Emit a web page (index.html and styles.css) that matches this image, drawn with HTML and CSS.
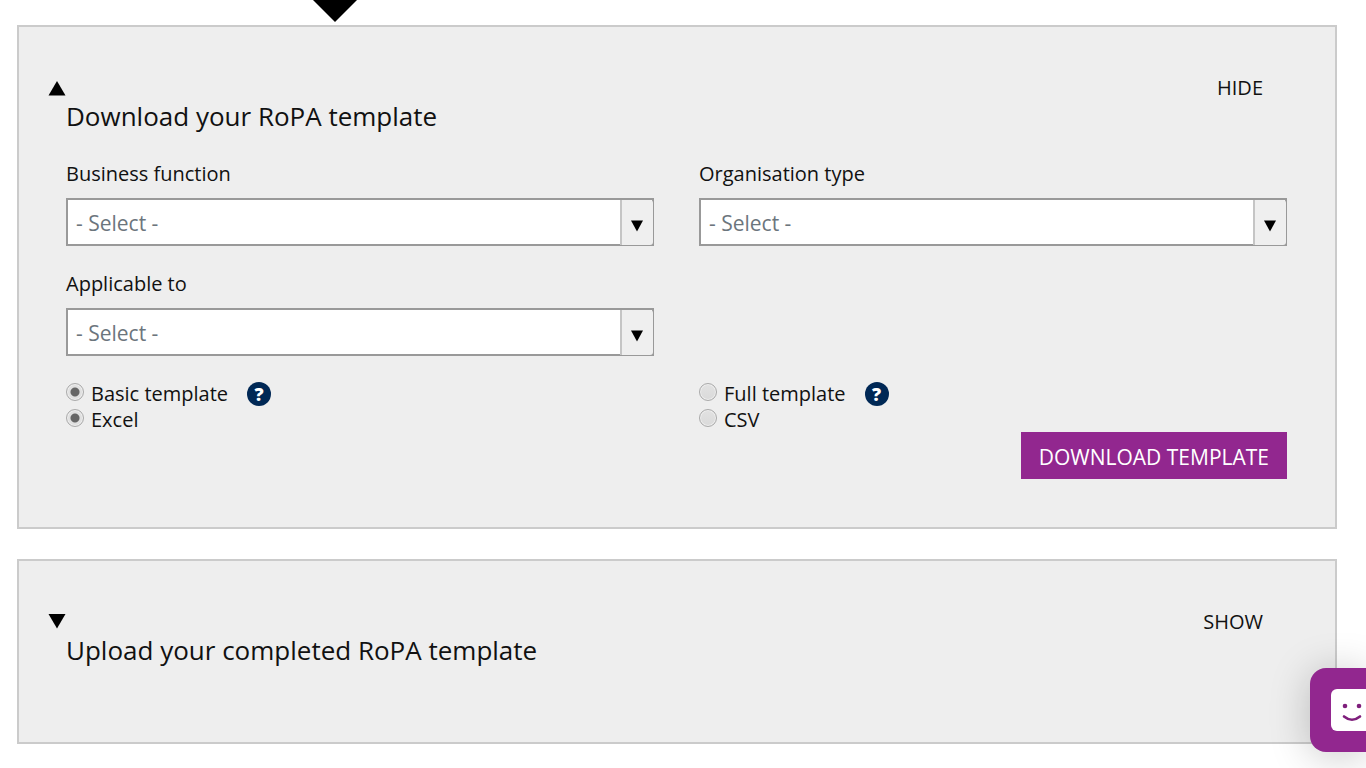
FILE: index.html
```html
<!DOCTYPE html>
<html lang="en">
<head>
<meta charset="utf-8">
<title>RoPA template</title>
<link rel="stylesheet" href="styles.css">
</head>
<body>
<div class="pointer">
  <svg width="46" height="23" viewBox="0 0 46 23" aria-hidden="true"><path d="M0 -1H46L23 22Z"/></svg>
</div>
<main class="panels">
  <section class="panel">
    <header class="panel-head">
      <svg class="marker" width="18" height="16" viewBox="0 0 18 16" aria-hidden="true"><path d="M9 1L17.500 15.500H.5Z"/></svg>
      <button class="toggle" type="button" aria-expanded="true">HIDE</button>
      <h2 class="title">Download your RoPA template</h2>
    </header>
    <form class="form">
      <div class="fields">
        <div class="field">
          <label for="function">Business function</label>
          <div class="combo">
            <select id="function"><option>- Select -</option></select>
            <span class="combo-arrow"><svg width="12" height="12" viewBox="0 0 12 12"><path d="M0 .5H12L6 11.500Z"/></svg></span>
          </div>
        </div>
        <div class="field">
          <label for="organisation">Organisation type</label>
          <div class="combo">
            <select id="organisation"><option>- Select -</option></select>
            <span class="combo-arrow"><svg width="12" height="12" viewBox="0 0 12 12"><path d="M0 .5H12L6 11.500Z"/></svg></span>
          </div>
        </div>
        <div class="field">
          <label for="applicable">Applicable to</label>
          <div class="combo">
            <select id="applicable"><option>- Select -</option></select>
            <span class="combo-arrow"><svg width="12" height="12" viewBox="0 0 12 12"><path d="M0 .5H12L6 11.500Z"/></svg></span>
          </div>
        </div>
      </div>
      <div class="options">
        <div class="option"><input type="radio" name="kind" id="basic" checked><label for="basic">Basic template</label><button class="help" type="button" aria-label="Help: basic template">?</button></div>
        <div class="option"><input type="radio" name="kind" id="full"><label for="full">Full template</label><button class="help" type="button" aria-label="Help: full template">?</button></div>
        <div class="option"><input type="radio" name="format" id="excel" checked><label for="excel">Excel</label></div>
        <div class="option"><input type="radio" name="format" id="csv"><label for="csv">CSV</label></div>
      </div>
      <div class="actions"><button class="download" type="button">DOWNLOAD TEMPLATE</button></div>
    </form>
  </section>
  <section class="panel panel-closed">
    <header class="panel-head">
      <svg class="marker" width="18" height="16" viewBox="0 0 18 16" aria-hidden="true"><path d="M.5 0H17.500L9 14.500Z"/></svg>
      <button class="toggle" type="button" aria-expanded="false">SHOW</button>
      <h2 class="title">Upload your completed RoPA template</h2>
    </header>
  </section>
</main>
<button class="feedback" type="button" aria-label="Feedback">
  <svg width="35" height="42" viewBox="0 0 35 42" aria-hidden="true">
    <rect width="60" height="42" rx="6" fill="#fff"/>
    <circle cx="14" cy="17" r="2.300"/><circle cx="28" cy="17" r="2.300"/>
    <path d="M13 27.500Q21 34 29 27.500" fill="none" stroke="#7f1f7c" stroke-width="2.600" stroke-linecap="round"/>
  </svg>
</button>
</body>
</html>
```
FILE: styles.css
```css
* { box-sizing: border-box; }
body {
  margin: 0;
  background: #fff;
  color: #111;
  font: 400 20px/28px "Open Sans", "Noto Sans", sans-serif;
}
button, select { font: inherit; }
svg { display: block; }
.pointer { height: 25px; padding-left: 312px; }
.panels {
  display: flex;
  flex-direction: column;
  gap: 30px;
  margin: 0 29px 24px 17px;
}
.panel {
  padding: 47px 48px 48px 47px;
  border: 2px solid #cbcbcb;
  background: #eee;
}
.panel-closed { padding-bottom: 78px; }
.panel-head {
  display: grid;
  grid-template-columns: 18px 1fr auto;
  grid-template-rows: 28px 28px;
  align-items: center;
  margin-left: -18px;
}
.toggle {
  grid-column: 3;
  margin-right: 24px;
  padding: 0;
  border: 0;
  background: none;
  color: inherit;
  cursor: pointer;
}
.title {
  grid-column: 2 / 4;
  margin: 0;
  font-size: 26px;
  font-weight: 400;
  line-height: 26px;
}
.form { margin-top: 30px; }
.fields, .options {
  display: grid;
  grid-template-columns: 1fr 1fr;
  column-gap: 45px;
}
.fields { row-gap: 24px; }
.field { display: flex; flex-direction: column; gap: 10px; }
.combo { position: relative; }
.combo select {
  display: block;
  width: 100%;
  height: 48px;
  padding: 2px 40px 0 8px;
  border: 2px solid #999;
  border-radius: 0;
  background: #fff;
  color: #6c757d;
  font-size: 21px;
  appearance: none;
}
.combo-arrow {
  position: absolute;
  top: 2px;
  right: 1px;
  bottom: 1px;
  display: flex;
  align-items: center;
  justify-content: center;
  width: 33px;
  padding: 6px 1px 0 0;
  border-left: 2px solid #c5c5c5;
  border-radius: 0 3px 3px 0;
  background: #efefef;
  pointer-events: none;
}
.options { margin-top: 25px; line-height: 26px; }
.option { display: flex; align-items: center; height: 26px; }
.option input {
  width: 18px;
  height: 18px;
  margin: 0 7px 4px 0;
  border: 1px solid #aaa;
  border-radius: 50%;
  background: linear-gradient(#e2e2e2, #dadada);
  box-shadow: inset 0 0 0 1px #eee;
  appearance: none;
}
.option input:checked {
  background: radial-gradient(circle, #666 4px, #e0e0e0 5px);
}
.help {
  width: 24px;
  height: 24px;
  margin-left: 19px;
  padding: 0;
  border: 0;
  border-radius: 50%;
  background: #002855;
  color: #fff;
  font-size: 18px;
  font-weight: 800;
  line-height: 24px;
}
.actions { display: flex; justify-content: flex-end; margin-top: -1px; }
.download {
  height: 47px;
  padding: 2px 18px 0;
  border: 0;
  background: #92278f;
  color: #fff;
  font-size: 21px;
}
.feedback {
  position: fixed;
  right: 0;
  bottom: 16px;
  padding: 21px 0 21px 21px;
  border: 0;
  border-radius: 16px 0 0 16px;
  background: #92278f;
  fill: #7f1f7c;
  box-shadow: 0 4px 40px rgba(0, 0, 0, .22);
}
```
